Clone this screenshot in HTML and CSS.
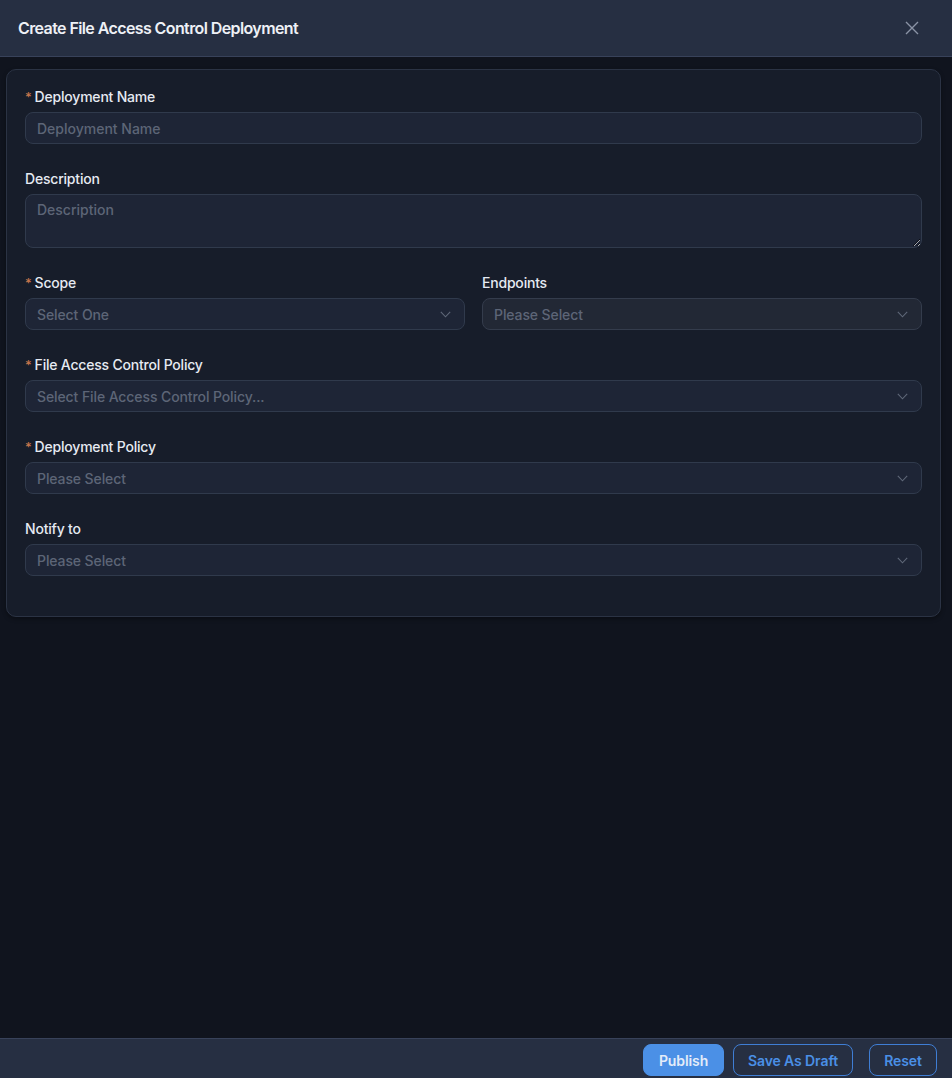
FILE: index.html
```html
<!DOCTYPE html>
<html lang="en">
<head>
<meta charset="utf-8">
<title>Create File Access Control Deployment</title>
<link rel="stylesheet" href="styles.css">
</head>
<body>
<div class="drawer">
  <header class="drawer-head">
    <h1 class="drawer-title">Create File Access Control Deployment</h1>
    <button class="close-btn" aria-label="Close">
      <svg width="14" height="14" viewBox="0 0 14 14"><path d="M1 1L13 13M13 1L1 13" stroke="#8a93a5" stroke-width="1.4" fill="none"/></svg>
    </button>
  </header>

  <main class="drawer-body">
    <form class="card">
      <div class="field">
        <label class="label"><span class="req">*</span>Deployment Name</label>
        <input class="input" type="text" placeholder="Deployment Name">
      </div>

      <div class="field">
        <label class="label">Description</label>
        <textarea class="input textarea" placeholder="Description"></textarea>
      </div>

      <div class="row">
        <div class="field">
          <label class="label"><span class="req">*</span>Scope</label>
          <div class="select"><span>Select One</span><svg class="chev" width="11" height="7" viewBox="0 0 11 7"><path d="M0.8 0.8L5.5 5.8L10.2 0.8" stroke="#5f6879" stroke-width="1.1" fill="none"/></svg></div>
        </div>
        <div class="field">
          <label class="label">Endpoints</label>
          <div class="select disabled"><span>Please Select</span><svg class="chev" width="11" height="7" viewBox="0 0 11 7"><path d="M0.8 0.8L5.5 5.8L10.2 0.8" stroke="#5f6879" stroke-width="1.1" fill="none"/></svg></div>
        </div>
      </div>

      <div class="field">
        <label class="label"><span class="req">*</span>File Access Control Policy</label>
        <div class="select"><span>Select File Access Control Policy...</span><svg class="chev" width="11" height="7" viewBox="0 0 11 7"><path d="M0.8 0.8L5.5 5.8L10.2 0.8" stroke="#5f6879" stroke-width="1.1" fill="none"/></svg></div>
      </div>

      <div class="field">
        <label class="label"><span class="req">*</span>Deployment Policy</label>
        <div class="select"><span>Please Select</span><svg class="chev" width="11" height="7" viewBox="0 0 11 7"><path d="M0.8 0.8L5.5 5.8L10.2 0.8" stroke="#5f6879" stroke-width="1.1" fill="none"/></svg></div>
      </div>

      <div class="field">
        <label class="label">Notify to</label>
        <div class="select"><span>Please Select</span><svg class="chev" width="11" height="7" viewBox="0 0 11 7"><path d="M0.8 0.8L5.5 5.8L10.2 0.8" stroke="#5f6879" stroke-width="1.1" fill="none"/></svg></div>
      </div>
    </form>
  </main>

  <footer class="drawer-foot">
    <button class="btn btn-primary">Publish</button>
    <button class="btn btn-outline btn-draft">Save As Draft</button>
    <button class="btn btn-outline btn-reset">Reset</button>
  </footer>
</div>
</body>
</html>
```

FILE: styles.css
```css
* { box-sizing: border-box; }

html, body {
  margin: 0;
  height: 100%;
}

body {
  background: #10141e;
  font-family: "Inter", "Noto Sans", sans-serif;
  color: #e6eaf2;
}

.drawer {
  display: flex;
  flex-direction: column;
  height: 1078px;
}

.drawer-head {
  height: 57px;
  flex: none;
  display: flex;
  align-items: center;
  justify-content: space-between;
  padding: 0 33px 0 18px;
  background: #262f42;
  border-bottom: 1px solid #38425a;
}

.drawer-title {
  margin: 0;
  font-size: 16px;
  font-weight: 600;
  letter-spacing: -0.6px;
  color: #eef1f6;
}

.close-btn {
  background: none;
  border: 0;
  padding: 0;
  width: 14px;
  height: 14px;
  display: flex;
  cursor: pointer;
}

.drawer-body {
  flex: 1;
  padding: 12px 11px 0 6px;
}

.card {
  background: #171d2a;
  border: 1px solid #2b3344;
  border-radius: 10px;
  padding: 16px 18px 16px;
  box-shadow: 0 2px 4px rgba(0, 0, 0, 0.35);
}

.field {
  display: flex;
  flex-direction: column;
  margin-bottom: 24px;
  min-width: 0;
}

.row {
  display: grid;
  grid-template-columns: 1fr 1fr;
  column-gap: 17px;
}

.label {
  font-size: 14px;
  font-weight: 500;
  line-height: 22px;
  margin-bottom: 4px;
  color: #e6eaf2;
  letter-spacing: -0.2px;
}

.req {
  color: #c8764c;
  font-size: 13px;
  margin-right: 3px;
}

.input,
.select {
  height: 32px;
  background: #1e2536;
  border: 1px solid #303a4c;
  border-radius: 8px;
  font-family: inherit;
  font-size: 14px;
  color: #e6eaf2;
  padding: 0 11px;
  outline: none;
  width: 100%;
}

.input::placeholder {
  color: #5d6577;
  font-weight: 500;
}

.textarea {
  height: 54px;
  padding: 6px 11px;
  resize: vertical;
  display: block;
}

.select {
  display: flex;
  align-items: center;
  justify-content: space-between;
  color: #5d6577;
  font-weight: 500;
  letter-spacing: -0.1px;
}

.select.disabled {
  background: #222835;
  border-color: #343c4c;
}

.chev {
  flex: none;
  margin-right: 2px;
}

.drawer-foot {
  height: 40px;
  flex: none;
  display: flex;
  align-items: flex-end;
  justify-content: flex-end;
  padding: 0 15px 2px 0;
  background: #262f42;
  border-top: 1px solid #38425a;
}

.btn {
  height: 32px;
  border-radius: 8px;
  font-family: inherit;
  font-size: 14px;
  font-weight: 600;
  padding: 0;
  cursor: pointer;
  letter-spacing: -0.1px;
}

.btn-primary {
  background: #4b90e6;
  color: #e3ecf9;
  border: 1px solid #4b90e6;
  width: 81px;
}

.btn-outline {
  background: transparent;
  color: #4a8fe6;
  border: 1px solid #3f7ed4;
}

.btn-draft {
  width: 120px;
  margin-left: 9px;
}

.btn-reset {
  width: 68px;
  margin-left: 16px;
}
```
